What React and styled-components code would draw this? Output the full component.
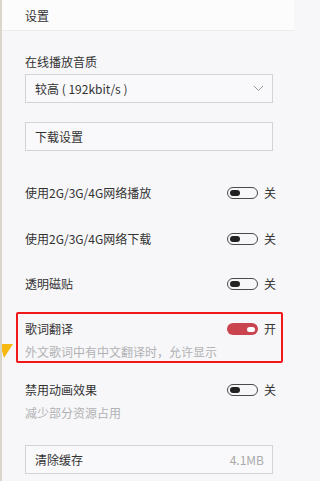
import React from "react";
import styled, { createGlobalStyle } from "styled-components";

const Global = createGlobalStyle`
  html, body { margin: 0; padding: 0; background: #f7f7f9; }
  body { font-family: "Noto Sans CJK SC", "Noto Sans", sans-serif; font-size: 12px; color: #333; }
`;

const Page = styled.div`
  position: relative;
  width: 294px;
  height: 481px;
  box-sizing: border-box;
  border-left: 2px solid #d9d7c9;
  background: #f7f7f9;
  overflow: hidden;
`;

const Header = styled.div`
  height: 30px;
  display: flex;
  align-items: center;
  padding-left: 23px;
  background: #fcfcfc;
  border-bottom: 1px solid #ececee;
  font-size: 12px;
  color: #333;
`;

const Body = styled.div`
  display: flex;
  flex-direction: column;
  padding: 0 21px 0 23px;
`;

const Label = styled.div`
  margin-top: ${(p) => p.$mt}px;
  line-height: 16px;
  height: 16px;
  color: #333;
`;

const Box = styled.div`
  margin-top: ${(p) => p.$mt}px;
  height: 29px;
  box-sizing: border-box;
  border: 1px solid #d3d3d5;
  background: #f9f9fb;
  display: flex;
  align-items: center;
  justify-content: space-between;
  padding: 0 8px 0 9px;
  color: #333;
`;

const BoxValue = styled.span`
  color: #aaa;
`;

const Item = styled.div`
  margin-top: ${(p) => p.$mt}px;
  display: flex;
  flex-direction: column;
`;

const Highlight = styled(Item)`
  margin-left: -9px;
  margin-right: -10px;
  border: 2px solid #f01818;
  border-radius: 2px;
  padding: 5px 8px 0 7px;
`;

const Row = styled.div`
  height: 20px;
  display: flex;
  align-items: center;
  justify-content: space-between;
  line-height: 20px;
`;

const Sub = styled.div`
  margin-top: 4px;
  height: 18px;
  line-height: 18px;
  color: #b2b2b4;
`;

const SwitchGroup = styled.div`
  display: flex;
  align-items: center;
  gap: 6px;
  margin-right: -3px;
`;

const Track = styled.div`
  width: 31px;
  height: 12px;
  box-sizing: border-box;
  border-radius: 6px;
  border: ${(p) => (p.$on ? "none" : "1.3px solid #4a4a4a")};
  background: ${(p) => (p.$on ? "#c9444e" : "transparent")};
  display: flex;
  align-items: center;
  justify-content: ${(p) => (p.$on ? "flex-end" : "flex-start")};
  padding: 0 3px 0 2px;
`;

const Thumb = styled.div`
  width: ${(p) => (p.$on ? 8 : 10)}px;
  height: ${(p) => (p.$on ? 5 : 6)}px;
  border-radius: 3px;
  background: ${(p) => (p.$on ? "#fff" : "#222")};
`;

const SwitchText = styled.span`
  color: #333;
  font-size: 12px;
`;

const Pointer = styled.svg`
  position: absolute;
  left: -2px;
  top: 344px;
`;

const Toggle = ({ on }) => (
  <SwitchGroup>
    <Track $on={on}>
      <Thumb $on={on} />
    </Track>
    <SwitchText>{on ? "开" : "关"}</SwitchText>
  </SwitchGroup>
);

export default function App() {
  return (
    <Page>
      <Global />
      <Header>设置</Header>
      <Body>
        <Label $mt={23}>在线播放音质</Label>
        <Box $mt={4}>
          <span>较高 ( 192kbit/s )</span>
          <svg width="11" height="7" viewBox="0 0 11 7">
            <polyline points="1,1 5.5,5.5 10,1" fill="none" stroke="#9a9a9a" strokeWidth="1" />
          </svg>
        </Box>
        <Box $mt={19}>
          <span>下载设置</span>
        </Box>
        <Item $mt={32}>
          <Row>
            <span>使用2G/3G/4G网络播放</span>
            <Toggle on={false} />
          </Row>
        </Item>
        <Item $mt={26}>
          <Row>
            <span>使用2G/3G/4G网络下载</span>
            <Toggle on={false} />
          </Row>
        </Item>
        <Item $mt={25}>
          <Row>
            <span>透明磁贴</span>
            <Toggle on={false} />
          </Row>
        </Item>
        <Highlight $mt={18}>
          <Row>
            <span>歌词翻译</span>
            <Toggle on={true} />
          </Row>
          <Sub>外文歌词中有中文翻译时，允许显示</Sub>
        </Highlight>
        <Item $mt={17}>
          <Row>
            <span>禁用动画效果</span>
            <Toggle on={false} />
          </Row>
          <Sub>减少部分资源占用</Sub>
        </Item>
        <Box $mt={23}>
          <span>清除缓存</span>
          <BoxValue>4.1MB</BoxValue>
        </Box>
      </Body>
      <Pointer width="14" height="16" viewBox="0 0 14 16">
        <polygon points="0,0 13,0 4,14" fill="#f7b90f" />
      </Pointer>
    </Page>
  );
}
